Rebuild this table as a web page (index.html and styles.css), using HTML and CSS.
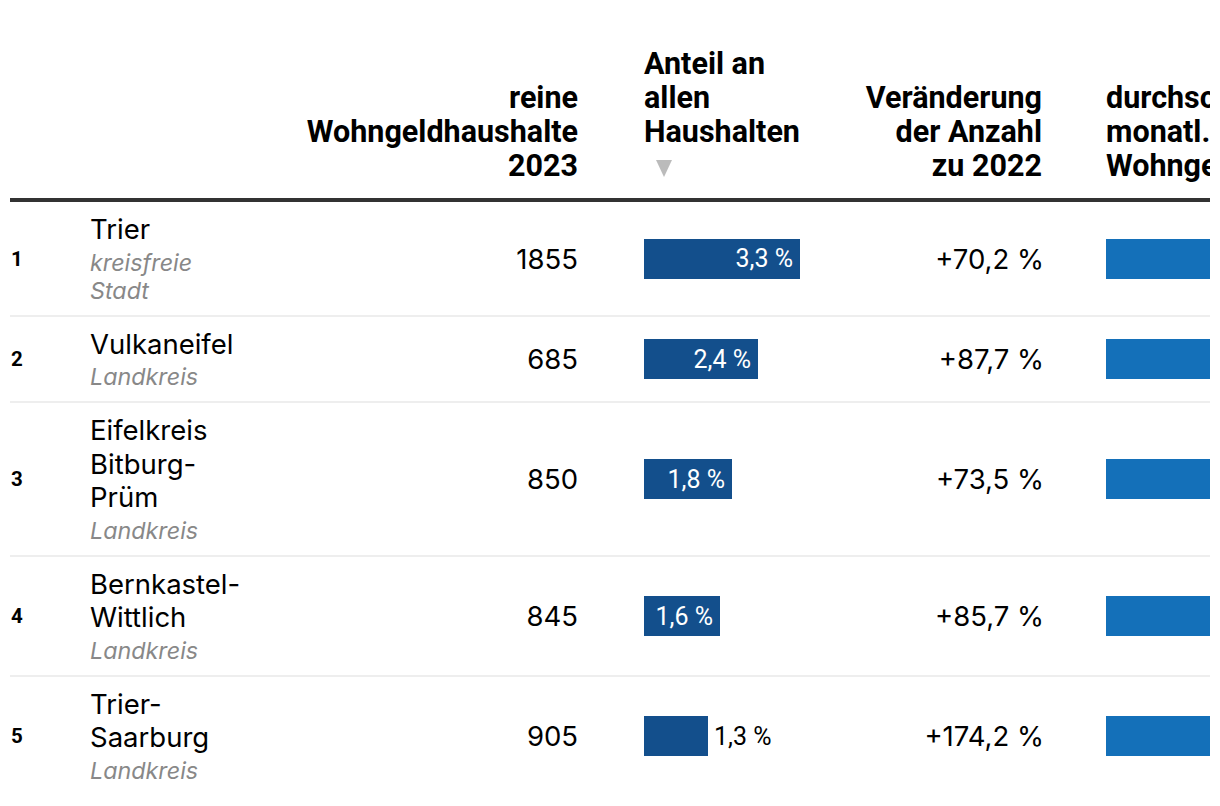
FILE: index.html
```html
<!DOCTYPE html>
<html lang="de">
<head>
<meta charset="utf-8">
<link rel="stylesheet" href="styles.css">
</head>
<body>
<div class="wrap">
<table class="tbl">
  <colgroup>
    <col class="c-rank"><col class="c-name"><col class="c-num"><col class="c-bar"><col class="c-chg"><col class="c-last">
  </colgroup>
  <thead>
    <tr>
      <th class="rank"></th>
      <th class="name"></th>
      <th class="num">reine<br>Wohngeldhaushalte<br>2023</th>
      <th class="bar">Anteil an<br>allen<br>Haushalten<br><span class="sort"></span></th>
      <th class="chg">Veränderung<br>der Anzahl<br>zu 2022</th>
      <th class="last">durchschnittl.<br>monatl.<br>Wohngeld</th>
    </tr>
  </thead>
  <tbody>
    <tr>
      <td class="rank">1</td>
      <td class="name"><div class="nm">Trier</div><div class="sub">kreisfreie<br>Stadt</div></td>
      <td class="num">1855</td>
      <td class="bar"><div class="barwrap"><div class="b dark" style="width:156px"><span class="in">3,3 %</span></div></div></td>
      <td class="chg">+70,2 %</td>
      <td class="last"><div class="b light" style="width:190px"></div></td>
    </tr>
    <tr>
      <td class="rank">2</td>
      <td class="name"><div class="nm">Vulkaneifel</div><div class="sub">Landkreis</div></td>
      <td class="num">685</td>
      <td class="bar"><div class="barwrap"><div class="b dark" style="width:114px"><span class="in">2,4 %</span></div></div></td>
      <td class="chg">+87,7 %</td>
      <td class="last"><div class="b light" style="width:180px"></div></td>
    </tr>
    <tr>
      <td class="rank">3</td>
      <td class="name"><div class="nm">Eifelkreis<br>Bitburg-<br>Prüm</div><div class="sub">Landkreis</div></td>
      <td class="num">850</td>
      <td class="bar"><div class="barwrap"><div class="b dark" style="width:88px"><span class="in">1,8 %</span></div></div></td>
      <td class="chg">+73,5 %</td>
      <td class="last"><div class="b light" style="width:175px"></div></td>
    </tr>
    <tr>
      <td class="rank">4</td>
      <td class="name"><div class="nm">Bernkastel-<br>Wittlich</div><div class="sub">Landkreis</div></td>
      <td class="num">845</td>
      <td class="bar"><div class="barwrap"><div class="b dark" style="width:76px"><span class="in">1,6 %</span></div></div></td>
      <td class="chg">+85,7 %</td>
      <td class="last"><div class="b light" style="width:170px"></div></td>
    </tr>
    <tr class="lastrow">
      <td class="rank">5</td>
      <td class="name"><div class="nm">Trier-<br>Saarburg</div><div class="sub">Landkreis</div></td>
      <td class="num">905</td>
      <td class="bar"><div class="barwrap"><div class="b dark" style="width:64px"></div><span class="out">1,3 %</span></div></td>
      <td class="chg">+174,2 %</td>
      <td class="last"><div class="b light" style="width:185px"></div></td>
    </tr>
  </tbody>
</table>
</div>
</body>
</html>
```
FILE: styles.css
```css
html, body {
  margin: 0;
  padding: 0;
  background: #fff;
}
body {
  font-family: Inter, "Noto Sans", sans-serif;
  color: #000;
}
.wrap {
  width: 1200px;
  margin: 0 10px;
  padding-top: 47px;
  overflow: hidden;
  height: 759px;
}
.tbl {
  width: 1400px;
  table-layout: fixed;
  border-collapse: separate;
  border-spacing: 0;
}
.c-rank { width: 80px; }
.c-name { width: 190px; }
.c-num { width: 298px; }
.c-bar { width: 222px; }
.c-chg { width: 244px; }
.c-last { width: 366px; }

th {
  font-family: Roboto, "Liberation Sans", sans-serif;
  font-weight: 700;
  font-size: 30.5px;
  line-height: 34px;
  vertical-align: bottom;
  padding: 0 0 15px;
  border-bottom: 4px solid #333;
  white-space: nowrap;
  text-align: left;
}
th.num { text-align: right; }
th.chg { text-align: right; padding-right: 2px; }
th.bar { padding-left: 66px; }
th.last { padding-left: 62px; }
.sort {
  display: inline-block;
  width: 0;
  height: 0;
  margin-left: 12px;
  border-left: 8px solid transparent;
  border-right: 8px solid transparent;
  border-top: 17px solid #bbb;
  vertical-align: -1px;
}

td {
  padding: 11px 0 10px;
  border-bottom: 2px solid #eee;
  vertical-align: middle;
  white-space: nowrap;
}
.lastrow td { border-bottom: 0; }
td.rank {
  font-family: Roboto, "Liberation Sans", sans-serif;
  font-weight: 700;
  font-size: 20.5px;
  padding-left: 1px;
}
.nm {
  font-size: 27.5px;
  line-height: 33.5px;
}
.sub {
  padding-top: 2px;
  font-size: 23.3px;
  line-height: 28px;
  font-style: italic;
  color: #888;
}
td.num, td.chg {
  text-align: right;
  font-size: 27.5px;
}
td.bar { padding-left: 66px; }
td.last { padding-left: 62px; }
.barwrap {
  display: flex;
  align-items: center;
}
.b {
  height: 40px;
  display: flex;
  align-items: center;
  justify-content: flex-end;
  box-sizing: border-box;
}
.dark { background: #134f8c; }
.light { background: #1470b9; }
.in, .out {
  font-family: Roboto, "Liberation Sans", sans-serif;
  font-size: 25px;
}
.in {
  color: #fff;
  padding-right: 7px;
}
.out {
  margin-left: 6px;
  color: #000;
}
```
